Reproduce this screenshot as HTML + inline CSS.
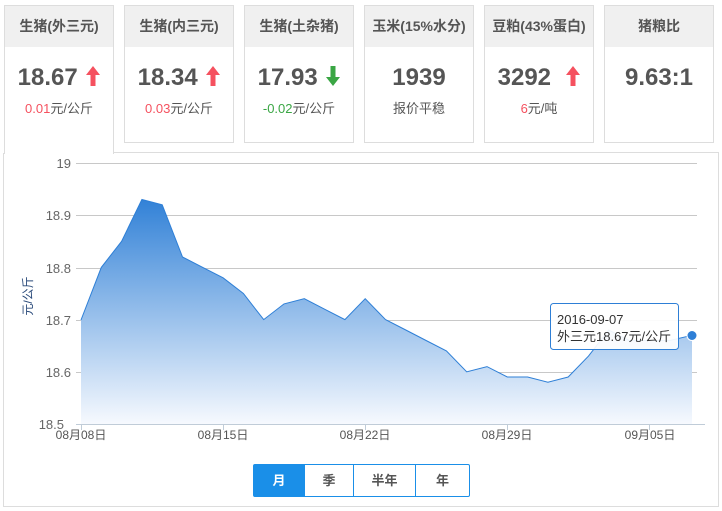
<!DOCTYPE html>
<html><head><meta charset="utf-8"><style>
*{margin:0;padding:0;box-sizing:border-box}
body{width:722px;height:511px;background:#fff;font-family:"Liberation Sans","Noto Sans CJK SC",sans-serif;position:relative;overflow:hidden}
.card{position:absolute;top:5px;width:110px;height:138px;border:1px solid #ddd;background:#fff;text-align:center}
.card .h{height:41px;background:#f0f0f0;color:#555;font-size:14px;font-weight:bold;line-height:41px}
.card .v{font-size:24px;font-weight:bold;margin-top:17px;line-height:28px;color:#555}
.card .s{font-size:13px;color:#555;margin-top:6px}
.r{color:#f5515f}.g{color:#3aa644}
.v svg{vertical-align:-1px;margin-left:2px}
.panel{position:absolute;left:3px;top:153px;width:716px;height:354px;border:1px solid #ddd;border-top:none}
.btns{position:absolute;left:253px;top:464px;display:flex;height:33px;border:1px solid #1a8fe8;border-radius:2px}
.btns div{width:49px;text-align:center;line-height:31px;font-size:13px;font-weight:bold;color:#555;border-left:1px solid #1a8fe8}
.btns div:first-child{background:#1a8fe8;color:#fff;border:none;width:50px}
</style></head><body>
<div class="panel"></div>
<div style="position:absolute;left:113px;top:152px;width:606px;height:1px;background:#ddd"></div>
<div class="card" style="left:4px;height:149px;border-bottom:none"><div class="h">生猪(外三元)</div><div class="v r">18.67 <svg width="14" height="20" viewBox="0 0 14 20"><path d="M7 0 L14 9 L9.5 9 L9.5 20 L4.5 20 L4.5 9 L0 9 Z" fill="#f5515f"/></svg></div><div class="s"><span class="r">0.01</span>元/公斤</div></div>
<div class="card" style="left:124px"><div class="h">生猪(内三元)</div><div class="v r">18.34 <svg width="14" height="20" viewBox="0 0 14 20"><path d="M7 0 L14 9 L9.5 9 L9.5 20 L4.5 20 L4.5 9 L0 9 Z" fill="#f5515f"/></svg></div><div class="s"><span class="r">0.03</span>元/公斤</div></div>
<div class="card" style="left:244px"><div class="h">生猪(土杂猪)</div><div class="v g">17.93 <svg width="14" height="20" viewBox="0 0 14 20"><path d="M7 20 L14 11 L9.5 11 L9.5 0 L4.5 0 L4.5 11 L0 11 Z" fill="#3aa644"/></svg></div><div class="s"><span class="g">-0.02</span>元/公斤</div></div>
<div class="card" style="left:364px"><div class="h">玉米(15%水分)</div><div class="v">1939</div><div class="s">报价平稳</div></div>
<div class="card" style="left:484px"><div class="h">豆粕(43%蛋白)</div><div class="v r">3292 &nbsp;<svg width="14" height="20" viewBox="0 0 14 20"><path d="M7 0 L14 9 L9.5 9 L9.5 20 L4.5 20 L4.5 9 L0 9 Z" fill="#f5515f"/></svg></div><div class="s"><span class="r">6</span>元/吨</div></div>
<div class="card" style="left:604px"><div class="h">猪粮比</div><div class="v">9.63:1</div></div>
<svg style="position:absolute;left:0;top:0" width="722" height="511">
<defs><linearGradient id="gr" x1="0" y1="195" x2="0" y2="424" gradientUnits="userSpaceOnUse"><stop offset="0" stop-color="#2e7fd6"/><stop offset="1" stop-color="#f6f9fe"/></linearGradient></defs>
<g stroke="#c8c8c8" stroke-width="1">
<line x1="76" y1="163.5" x2="697" y2="163.5"/><line x1="76" y1="215.5" x2="697" y2="215.5"/><line x1="76" y1="268.5" x2="697" y2="268.5"/><line x1="76" y1="320.5" x2="697" y2="320.5"/><line x1="76" y1="372.5" x2="697" y2="372.5"/></g>
<path fill="url(#gr)" d="M81,320 L101.3,267.4 L121.6,241.3 L141.9,199.5 L162.2,204.8 L182.5,257 L202.8,267.4 L223.1,277.8 L243.4,293.5 L263.7,319.6 L284,303.9 L304.3,298.7 L324.6,309.2 L344.9,319.6 L365.2,298.7 L385.5,319.6 L405.8,330 L426.1,340.5 L446.4,350.9 L466.7,371.8 L487,366.6 L507.3,377 L527.6,377 L547.9,382.2 L568.2,377 L588.5,356.1 L608.8,330 L629.1,340.5 L649.4,340.5 L669.7,340.5 L692,335.3 L692,424 L81,424 Z"/>
<path fill="none" stroke="#2e7fd6" stroke-width="1" d="M81,320 L101.3,267.4 L121.6,241.3 L141.9,199.5 L162.2,204.8 L182.5,257 L202.8,267.4 L223.1,277.8 L243.4,293.5 L263.7,319.6 L284,303.9 L304.3,298.7 L324.6,309.2 L344.9,319.6 L365.2,298.7 L385.5,319.6 L405.8,330 L426.1,340.5 L446.4,350.9 L466.7,371.8 L487,366.6 L507.3,377 L527.6,377 L547.9,382.2 L568.2,377 L588.5,356.1 L608.8,330 L629.1,340.5 L649.4,340.5 L669.7,340.5 L692,335.3"/>
<line x1="76" y1="424.5" x2="705" y2="424.5" stroke="#c0ccd8"/>
<g stroke="#c0ccd8"><line x1="81.5" y1="424" x2="81.5" y2="430"/><line x1="223.5" y1="424" x2="223.5" y2="430"/><line x1="365.5" y1="424" x2="365.5" y2="430"/><line x1="507.5" y1="424" x2="507.5" y2="430"/><line x1="649.5" y1="424" x2="649.5" y2="430"/></g>
<circle cx="692" cy="335.5" r="5" fill="#2e7fd6" stroke="#fff" stroke-width="1"/>
<g font-size="13" fill="#666" text-anchor="end" font-family="Liberation Sans,sans-serif"><text x="71" y="168">19</text><text x="71" y="220">18.9</text><text x="71" y="273">18.8</text><text x="71" y="325">18.7</text><text x="71" y="377">18.6</text><text x="64" y="429">18.5</text></g>
<g font-size="12" fill="#555" text-anchor="middle"><text x="81" y="439">08月08日</text><text x="223" y="439">08月15日</text><text x="365" y="439">08月22日</text><text x="507" y="439">08月29日</text><text x="650" y="439">09月05日</text></g>
<text transform="translate(32,296) rotate(-90)" font-size="12" fill="#2a4a7a" text-anchor="middle">元/公斤</text>
<rect x="550.5" y="303.5" width="128" height="46" rx="3" fill="#fff" fill-opacity="0.92" stroke="#2e7fd6"/>
<text x="557" y="324" font-size="13" fill="#333">2016-09-07</text>
<text x="557" y="341" font-size="13" fill="#333">外三元18.67元/公斤</text>
</svg>
<div class="btns"><div>月</div><div>季</div><div style="width:62px">半年</div><div style="width:54px">年</div></div>
</body></html>
